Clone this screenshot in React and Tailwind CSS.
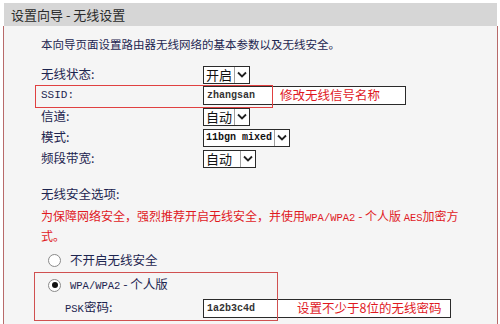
import React from "react"

const cn = '"Noto Sans CJK SC", "Noto Sans", sans-serif'
const mono = '"Liberation Mono", monospace'

function Chevron(){
    return <span className="flex h-full w-[15px] items-center justify-center border-l border-[#a0a0a0] bg-white">
        <svg width="10" height="7" viewBox="0 0 10 7">
            <path d="M1 1.5 L5 5.5 L9 1.5" fill="none" stroke="#222" strokeWidth="1.8"/>
        </svg>
    </span>
}

function Select({children, isMono, gap}){
    return <span className="flex h-[18px] items-stretch border border-[#2a2a2a] bg-white">
        <span className={"flex items-center px-[2px] text-[#111] " + (isMono ? "text-[10px] font-bold" : "text-[13px]")}
            style={{fontFamily: isMono ? mono : cn}}>{children}</span>
        {gap && <span className="w-[6px]"/>}
        <Chevron/>
    </span>
}

function Row({label, isMono, children}){
    return <div className="flex h-[21px] items-center">
        <span className={"w-[162px] text-[#1d2550] " + (isMono ? "text-[11px]" : "text-[12.5px]")}
            style={{fontFamily: isMono ? mono : cn}}>{label}</span>
        {children}
    </div>
}

function Radio({checked}){
    return <span className="flex h-[13px] w-[13px] items-center justify-center rounded-full border border-[#8a8a8a] bg-white">
        {checked && <span className="h-[6px] w-[6px] rounded-full bg-[#111]"/>}
    </span>
}

function M({children}){
    return <span className="text-[10.5px]" style={{fontFamily: mono}}>{children}</span>
}

export default function App(){
    return <div className="relative h-[324px] w-[500px] overflow-hidden bg-white pt-[3px]" style={{fontFamily: cn}}>
        <div className="ml-[4px] flex h-[23px] w-[493px] items-center bg-[#d6d6d6] pl-[7px] text-[13px] text-[#2a2a2a]">
            设置向导 - 无线设置
        </div>
        <div className="relative ml-[3px] h-[300px] w-[495px] border-l border-r border-[#b86a6a] bg-[#f5f5f5] pl-[37px]">
            <p className="pt-[9px] text-[11.5px] leading-[18px] text-[#1d2550]">本向导页面设置路由器无线网络的基本参数以及无线安全。</p>

            <div className="mt-[11px] flex flex-col">
                <Row label="无线状态:"><Select>开启</Select></Row>
                <Row label="SSID:" isMono>
                    <span className="flex h-[19px] w-[203px] items-center border border-[#2a2a2a] bg-white pl-[3px]">
                        <span className="w-[73px] text-[10px] font-bold text-[#333]" style={{fontFamily: mono}}>zhangsan</span>
                        <span className="whitespace-nowrap text-[12.5px] text-[#e0191f]">修改无线信号名称</span>
                    </span>
                </Row>
                <Row label="信道:"><Select>自动</Select></Row>
                <Row label="模式:"><Select isMono>11bgn mixed</Select></Row>
                <Row label="频段带宽:"><Select gap>自动</Select></Row>
            </div>

            <p className="mt-[16px] text-[12.5px] leading-[18px] text-[#1d2550]">无线安全选项:</p>
            <p className="mt-[4px] w-[440px] text-[12px] leading-[17px] text-[#e0191f]">
                为保障网络安全，强烈推荐开启无线安全，并使用<M>WPA/WPA2</M> - 个人版 <M>AES</M>加密方式。
            </p>

            <div className="mt-[4px] flex h-[24px] items-center gap-[9px] pl-[7px] text-[12.5px] text-[#1d2550]">
                <Radio/>
                <span>不开启无线安全</span>
            </div>
            <div className="flex h-[24px] items-center gap-[9px] pl-[7px] pt-[2px] text-[12.5px] text-[#1d2550]">
                <Radio checked/>
                <span><M>WPA/WPA2</M> - 个人版</span>
            </div>
            <div className="flex h-[24px] items-center pl-[24px]">
                <span className="w-[138px] text-[12.5px] text-[#1d2550]"><M>PSK</M>密码:</span>
                <span className="flex h-[19px] w-[248px] items-center border border-[#2a2a2a] bg-white pl-[3px]">
                    <span className="w-[90px] text-[10px] font-bold text-[#333]" style={{fontFamily: mono}}>1a2b3c4d</span>
                    <span className="whitespace-nowrap text-[12.5px] text-[#e0191f]">设置不少于8位的无线密码</span>
                </span>
            </div>
            <p className="mt-[4px] whitespace-nowrap pl-[243px] text-[11px] leading-[14px] text-[#8a8a8a]">最短为8个ASCII码字符，最长为63个ASCII码字符</p>

            <div className="absolute left-[31px] top-[59px] h-[23px] w-[238px] border border-[#e04040]"/>
            <div className="absolute left-[30px] top-[246px] h-[49px] w-[244px] border border-[#d05050]"/>
        </div>
    </div>
}
